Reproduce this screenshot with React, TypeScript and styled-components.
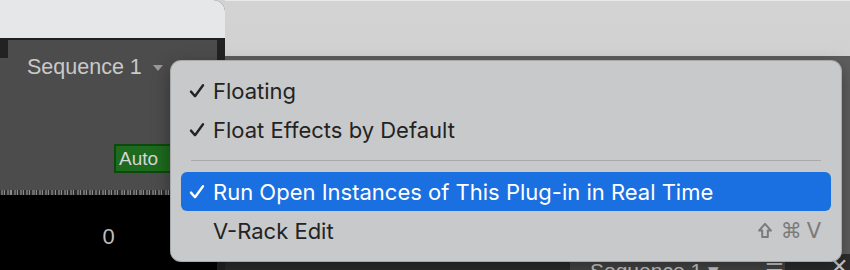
import React from 'react'
import styled, { createGlobalStyle } from 'styled-components'

const GlobalStyle = createGlobalStyle`
  html, body {
    margin: 0;
    padding: 0;
    background: #4c4c4c;
  }
  #root {
    width: 850px;
    height: 270px;
    overflow: hidden;
  }
`

const Desktop = styled.div`
  position: relative;
  display: grid;
  grid-template-columns: 225px 1fr;
  width: 850px;
  height: 270px;
  overflow: hidden;
  background: #d2d3d2;
  font-family: 'Liberation Sans', Arial, sans-serif;
`

/* ---- left mixer window ---- */

const MixerWindow = styled.div`
  display: flex;
  flex-direction: column;
  background: #4c4c4c;
  border-top-right-radius: 12px;
  overflow: hidden;
`

const TitleBar = styled.div`
  height: 38px;
  flex-shrink: 0;
  background: #e6e7e8;
  border-bottom: 2px solid #1f1f1f;
`

const ChannelBody = styled.div`
  flex: 1;
  display: flex;
  flex-direction: column;
  border-right: 8px solid #232323;
`

const TrackNameRow = styled.div`
  height: 55px;
  flex-shrink: 0;
  display: flex;
  align-items: flex-start;
`

const EdgeTab = styled.div`
  width: 8px;
  height: 18px;
  background: #222;
  margin-right: 19px;
`

const TrackName = styled.div`
  margin-top: 15px;
  display: flex;
  align-items: center;
  gap: 11px;
  color: #c9c9c9;
  font-size: 21.5px;
  line-height: 24px;
`

const Caret = styled.span`
  width: 0;
  height: 0;
  border-left: 5px solid transparent;
  border-right: 5px solid transparent;
  border-top: 6px solid #9a9a9a;
  margin-top: 2px;
`

const AutoRow = styled.div`
  height: 95px;
  flex-shrink: 0;
  display: flex;
  justify-content: flex-end;
  align-items: flex-end;
  padding: 0 41px 17px 0;
  box-sizing: border-box;
`

const AutoBadge = styled.div`
  width: 62px;
  height: 29px;
  box-sizing: border-box;
  background: #1e6a1e;
  border: 2px solid #0d4a0d;
  color: #d6d6d6;
  font-size: 19px;
  line-height: 25px;
  padding-left: 3px;
`

const Display = styled.div`
  flex: 1;
  background: #000;
  border-top: 5px solid #5a5a5a;
  border-image: repeating-linear-gradient(90deg, #6a6a6a 0 2px, #3a3a3a 2px 3px, #8a8a8a 3px 4px, #2c2c2c 4px 6px) 5;
  display: flex;
  justify-content: center;
  padding-top: 30px;
  color: #bdbdbd;
  font-size: 22px;
  line-height: 24px;
`

/* ---- right window behind the menu ---- */

const ArrangeWindow = styled.div`
  display: flex;
  flex-direction: column;
  background: #5e5e5e;
`

const ToolBar = styled.div`
  height: 59px;
  flex-shrink: 0;
  box-sizing: border-box;
  background: linear-gradient(#e9e9e9 0 1px, #d2d3d2 1px, #d0d1d0);
  border-bottom: 3px solid #5c5c5c;
`

const ArrangeBody = styled.div`
  flex: 1;
  display: flex;
  flex-direction: column;
  justify-content: flex-end;
`

const Dock = styled.div`
  height: 16px;
  display: flex;
  background: #2d2d2d;
  color: #cfcfcf;
  font-size: 21px;
  line-height: 34px;
  overflow: hidden;
`

const DockTab = styled.div<{ $width: number; $bg: string }>`
  width: ${({ $width }) => $width}px;
  flex-shrink: 0;
  background: ${({ $bg }) => $bg};
  padding-left: 20px;
  box-sizing: border-box;
  white-space: nowrap;
`

const DockClose = styled.div`
  margin-left: auto;
  padding-right: 2px;
  color: #d0d0d0;
  font-size: 22px;
  line-height: 26px;
`

/* ---- context menu ---- */

const Menu = styled.div`
  position: absolute;
  left: 170px;
  top: 60px;
  width: 672px;
  height: 202px;
  box-sizing: border-box;
  padding: 10px 10px 0;
  border-radius: 11px;
  background: #c8c9ca;
  border: 1px solid rgba(0, 0, 0, 0.16);
  box-shadow: 0 6px 18px rgba(0, 0, 0, 0.35);
  font-family: Inter, 'Noto Sans', sans-serif;
  font-size: 22px;
  color: #222;
`

const Item = styled.div<{ $active?: boolean }>`
  height: 39px;
  display: flex;
  align-items: center;
  padding: 0 10px 0 8px;
  border-radius: 6px;
  background: ${({ $active }) => ($active ? '#1a6fe1' : 'transparent')};
  color: ${({ $active }) => ($active ? '#fff' : '#232323')};
`

const Check = styled.span`
  width: 24px;
  flex-shrink: 0;
  display: flex;
  align-items: center;
`

const Label = styled.span`
  flex: 1;
  white-space: nowrap;
`

const Shortcut = styled.span`
  display: flex;
  align-items: center;
  gap: 5px;
  color: #7b7b7b;
  font-size: 21px;
  font-family: 'DejaVu Sans', Inter, sans-serif;
`

const Separator = styled.div`
  height: 1px;
  margin: 11px 10px 11px 10px;
  background: #a9a9a9;
`

const CheckMark = ({ color }: { color: string }) => (
  <svg width="16" height="16" viewBox="0 0 16 16">
    <path d="M2 8.6 L6 13.2 L14 2.3" fill="none" stroke={color} strokeWidth="2.4" strokeLinecap="round" strokeLinejoin="round" />
  </svg>
)

const ShiftKey = () => (
  <svg width="14" height="17" viewBox="0 0 14 17" style={{ marginRight: 4 }}>
    <path d="M7 1.8 L13 8.6 H9.8 V15 H4.2 V8.6 H1 Z" fill="none" stroke="#7b7b7b" strokeWidth="2" strokeLinejoin="round" />
  </svg>
)

export default function App() {
  return (
    <>
      <GlobalStyle />
      <Desktop>
        <MixerWindow>
          <TitleBar />
          <ChannelBody>
            <TrackNameRow>
              <EdgeTab />
              <TrackName>
                Sequence 1 <Caret />
              </TrackName>
            </TrackNameRow>
            <AutoRow>
              <AutoBadge>Auto</AutoBadge>
            </AutoRow>
            <Display>0</Display>
          </ChannelBody>
        </MixerWindow>

        <ArrangeWindow>
          <ToolBar />
          <ArrangeBody>
            <Dock>
              <DockTab $width={345} $bg="#2d2d2d" />
              <DockTab $width={175} $bg="#474747">Sequence 1 ▾</DockTab>
              <DockTab $width={40} $bg="#474747">☰</DockTab>
              <DockClose>✕</DockClose>
            </Dock>
          </ArrangeBody>
        </ArrangeWindow>

        <Menu>
          <Item>
            <Check><CheckMark color="#232323" /></Check>
            <Label>Floating</Label>
          </Item>
          <Item>
            <Check><CheckMark color="#232323" /></Check>
            <Label>Float Effects by Default</Label>
          </Item>
          <Separator />
          <Item $active>
            <Check><CheckMark color="#ffffff" /></Check>
            <Label>Run Open Instances of This Plug-in in Real Time</Label>
          </Item>
          <Item>
            <Check />
            <Label>V-Rack Edit</Label>
            <Shortcut>
              <ShiftKey />
              <span>⌘</span>
              <span>V</span>
            </Shortcut>
          </Item>
        </Menu>
      </Desktop>
    </>
  )
}
